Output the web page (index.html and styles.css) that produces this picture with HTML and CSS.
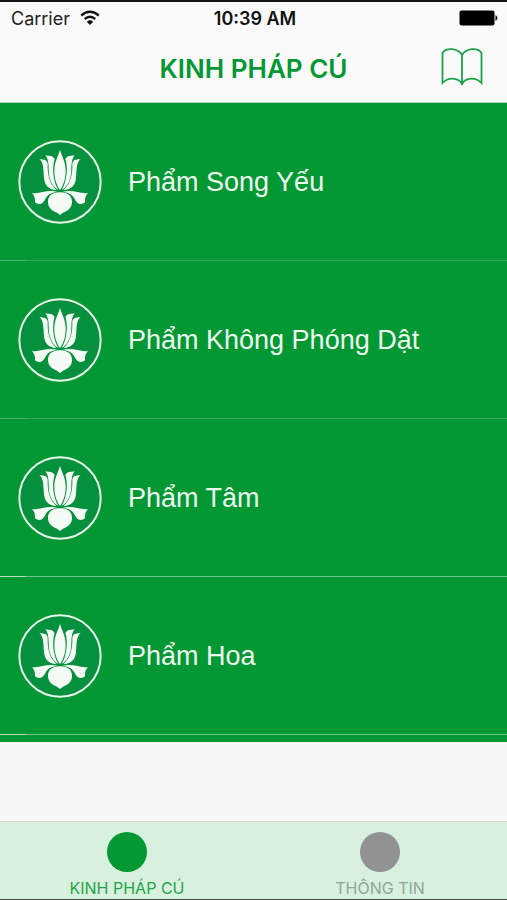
FILE: index.html
```html
<!DOCTYPE html>
<html lang="vi">

<head>
    <meta charset="UTF-8">
    <meta name="viewport" content="width=device-width, initial-scale=1.0">
    <title>Kinh Pháp Cú</title>
    <link rel="stylesheet" href="styles.css">
</head>

<body>
    <svg class="symbols" aria-hidden="true">
        <symbol id="lotus" viewBox="22 25 258 258">
            <circle cx="151" cy="154" r="122" fill="#04903c" stroke="#e6f6e9" stroke-width="6" />
            <g fill="#f4fbf5">
                <path d="M151 57 C147 76 134 90 134 120 C134 145 141 164 151 178 C161 164 168 145 168 120 C168 90 155 76 151 57 Z" />
                <path d="M107 73 C118 78 128 72 135 85 C127 108 129 150 146 178 C127 168 117 146 117 116 C117 97 115 83 107 73 Z" />
                <path d="M195 73 C184 78 174 72 167 85 C175 108 173 150 156 178 C175 168 185 146 185 116 C185 97 187 83 195 73 Z" />
                <path d="M89 84 C98 88 110 83 114 98 C113 130 118 158 140 178 C116 177 105 164 103 142 C101 118 103 98 89 84 Z" />
                <path d="M213 84 C204 88 192 83 188 98 C189 130 184 158 162 178 C186 177 197 164 199 142 C201 118 199 98 213 84 Z" />
                <path d="M67 187 C92 191 108 176 143 183 C123 186 112 193 107 205 C101 219 88 225 76 215 C77 204 74 194 67 187 Z" />
                <path d="M235 187 C210 191 194 176 159 183 C179 186 190 193 195 205 C201 219 214 225 226 215 C225 204 228 194 235 187 Z" />
                <path d="M151 185 C174 184 188 197 187 215 C187 233 172 242 160 246 L151 253 L142 246 C130 242 115 233 115 215 C114 197 128 184 151 185 Z" />
            </g>
        </symbol>
    </svg>

    <header class="top">
        <div class="status">
            <span class="carrier">Carrier
                <svg class="wifi" viewBox="0 0 20 16" aria-hidden="true">
                    <path d="M1.200 5.500 Q10 -2 18.800 5.500 M4.700 9 Q10 4.500 15.300 9" fill="none" stroke="#111" stroke-width="2.300" />
                    <path d="M6.800 11.700 Q10 9 13.200 11.700 L10 15 Z" fill="#111" />
                </svg>
            </span>
            <span class="time">10:39 AM</span>
            <svg class="battery" viewBox="0 0 40 16" aria-hidden="true">
                <rect x="0.500" y="0.500" width="35" height="15" rx="2" />
                <path d="M36.500 5 Q40.500 8 36.500 11 Z" />
            </svg>
        </div>
        <div class="navbar">
            <h1>KINH PHÁP CÚ</h1>
            <button type="button" class="bookBtn" aria-label="Kinh">
                <svg viewBox="0 0 42 40" aria-hidden="true">
                    <path d="M21 7 C17 0 5 -1 1.500 5 V35 C7 29 17 29 21 36 C25 29 35 29 40.500 35 V5 C37 -1 25 0 21 7 V37" />
                </svg>
            </button>
        </div>
    </header>

    <main>
        <ul class="chapters">
            <li><a href="#"><svg class="logo" aria-hidden="true"><use href="#lotus" /></svg>Phẩm Song Yếu</a></li>
            <li><a href="#"><svg class="logo" aria-hidden="true"><use href="#lotus" /></svg>Phẩm Không Phóng Dật</a></li>
            <li class="bright"><a href="#"><svg class="logo" aria-hidden="true"><use href="#lotus" /></svg>Phẩm Tâm</a></li>
            <li class="bright"><a href="#"><svg class="logo" aria-hidden="true"><use href="#lotus" /></svg>Phẩm Hoa</a></li>
        </ul>
    </main>

    <nav class="tabs">
        <a href="#" class="tab active"><span class="dot"></span>KINH PHÁP CÚ</a>
        <a href="#" class="tab"><span class="dot"></span>THÔNG TIN</a>
    </nav>
</body>

</html>
```
FILE: styles.css
```css
body {
    display: flex;
    flex-direction: column;
    min-height: 100vh;
    margin: 0;
    background-color: #f7f7f7;
    font-family: Inter, 'Liberation Sans', sans-serif;
}

.symbols {
    position: absolute;
    width: 0;
    height: 0;
}

.top {
    background-color: #fafafa;
    border-top: 2px solid #151515;
}

.status,
.navbar {
    display: grid;
    grid-template-columns: 1fr auto 1fr;
    align-items: center;
}

.status {
    height: 32px;
    padding: 0 8px 0 11px;
    font-size: 18px;
    color: #222;
}

.carrier {
    display: flex;
    align-items: center;
    gap: 10px;
}

.wifi {
    width: 20px;
    height: 16px;
}

.time {
    font-weight: 600;
    color: #111;
}

.battery {
    width: 40px;
    height: 16px;
    justify-self: end;
    fill: #000;
}

.navbar {
    height: 68px;
    padding: 0 24px;
    border-bottom: 1px solid #a5d6b3;
}

h1 {
    grid-column: 2;
    margin: 0;
    font-size: 26px;
    font-weight: 600;
    color: #039833;
}

.bookBtn {
    justify-self: end;
    padding: 0;
    border: none;
    background: none;
    cursor: pointer;
}

.bookBtn svg {
    display: block;
    width: 42px;
    height: 40px;
    fill: none;
    stroke: #1ba24b;
    stroke-width: 1.8;
}

.chapters {
    margin: 0;
    padding: 0 0 7px;
    list-style: none;
    background-color: #039833;
}

/* the separator is stronger over the left inset */
.chapters li {
    padding-bottom: 1px;
    background: linear-gradient(to right, #4db56d 26px, #35aa5a 26px) bottom / 100% 1px no-repeat;
}

.chapters .bright {
    background-image: linear-gradient(to right, #b5e2c1 26px, #6dc487 26px);
}

.chapters a {
    display: flex;
    align-items: center;
    gap: 25px;
    height: 157px;
    padding: 0 17px;
    font-family: 'Liberation Sans', sans-serif;
    font-size: 27px;
    line-height: 32px;
    color: #eefaf0;
    text-decoration: none;
}

.logo {
    width: 86px;
    height: 86px;
}

.tabs {
    display: flex;
    gap: 40px;
    justify-content: center;
    margin-top: auto;
    border-top: 1px solid #cbdccf;
    border-bottom: 1px solid #404a43;
    background-color: #d8f1de;
}

.tab {
    display: flex;
    flex: 0 1 213px;
    flex-direction: column;
    align-items: center;
    gap: 6px;
    padding: 10px 0 1px;
    font-size: 16px;
    line-height: 20px;
    color: #90a596;
    text-decoration: none;
}

.dot {
    width: 40px;
    height: 40px;
    border-radius: 50%;
    background-color: #929292;
}

.active {
    color: #1fa449;
}

.active .dot {
    background-color: #039833;
}
```
